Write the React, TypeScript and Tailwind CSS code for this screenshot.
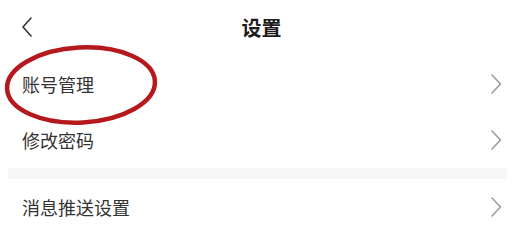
const font = "font-['Noto_Sans_CJK_SC','Noto_Sans',sans-serif]";

function Chevron() {
  return (
    <svg width="12" height="22" viewBox="0 0 12 22" fill="none" className="shrink-0">
      <path d="M2 2 L10.5 11 L2 20" stroke="#9a9a9a" strokeWidth="1.5" strokeLinecap="round" strokeLinejoin="round" />
    </svg>
  );
}

function Row({ label }: { label: string }) {
  return (
    <div className="flex h-14 items-center justify-between pl-[22px] pr-[21px]">
      <span className="text-[18px] leading-none text-[#333]">{label}</span>
      <Chevron />
    </div>
  );
}

export default function App() {
  return (
    <div className={`relative h-[235px] w-[523px] overflow-hidden bg-white ${font}`}>
      <header className="relative flex h-14 items-center justify-center">
        <svg
          width="12"
          height="22"
          viewBox="0 0 12 22"
          fill="none"
          className="absolute left-[21px] top-[16px]"
        >
          <path d="M10 2 L2 11 L10 20" stroke="#333" strokeWidth="1.6" strokeLinecap="round" strokeLinejoin="round" />
        </svg>
        <h1 className="text-[20px] font-semibold leading-none text-[#1c1c1c]">设置</h1>
      </header>

      <Row label="账号管理" />
      <Row label="修改密码" />
      <div className="ml-2 mr-4 h-[11px] bg-[#f6f6f6]" />
      <Row label="消息推送设置" />

      {/* red marker circle drawn over the first row */}
      <svg className="pointer-events-none absolute left-0 top-0" width="523" height="235">
        <ellipse
          cx="81"
          cy="85"
          rx="74"
          ry="37.5"
          fill="none"
          stroke="#b5191e"
          strokeWidth="4.5"
          transform="rotate(-3 81 85)"
        />
      </svg>
    </div>
  );
}
